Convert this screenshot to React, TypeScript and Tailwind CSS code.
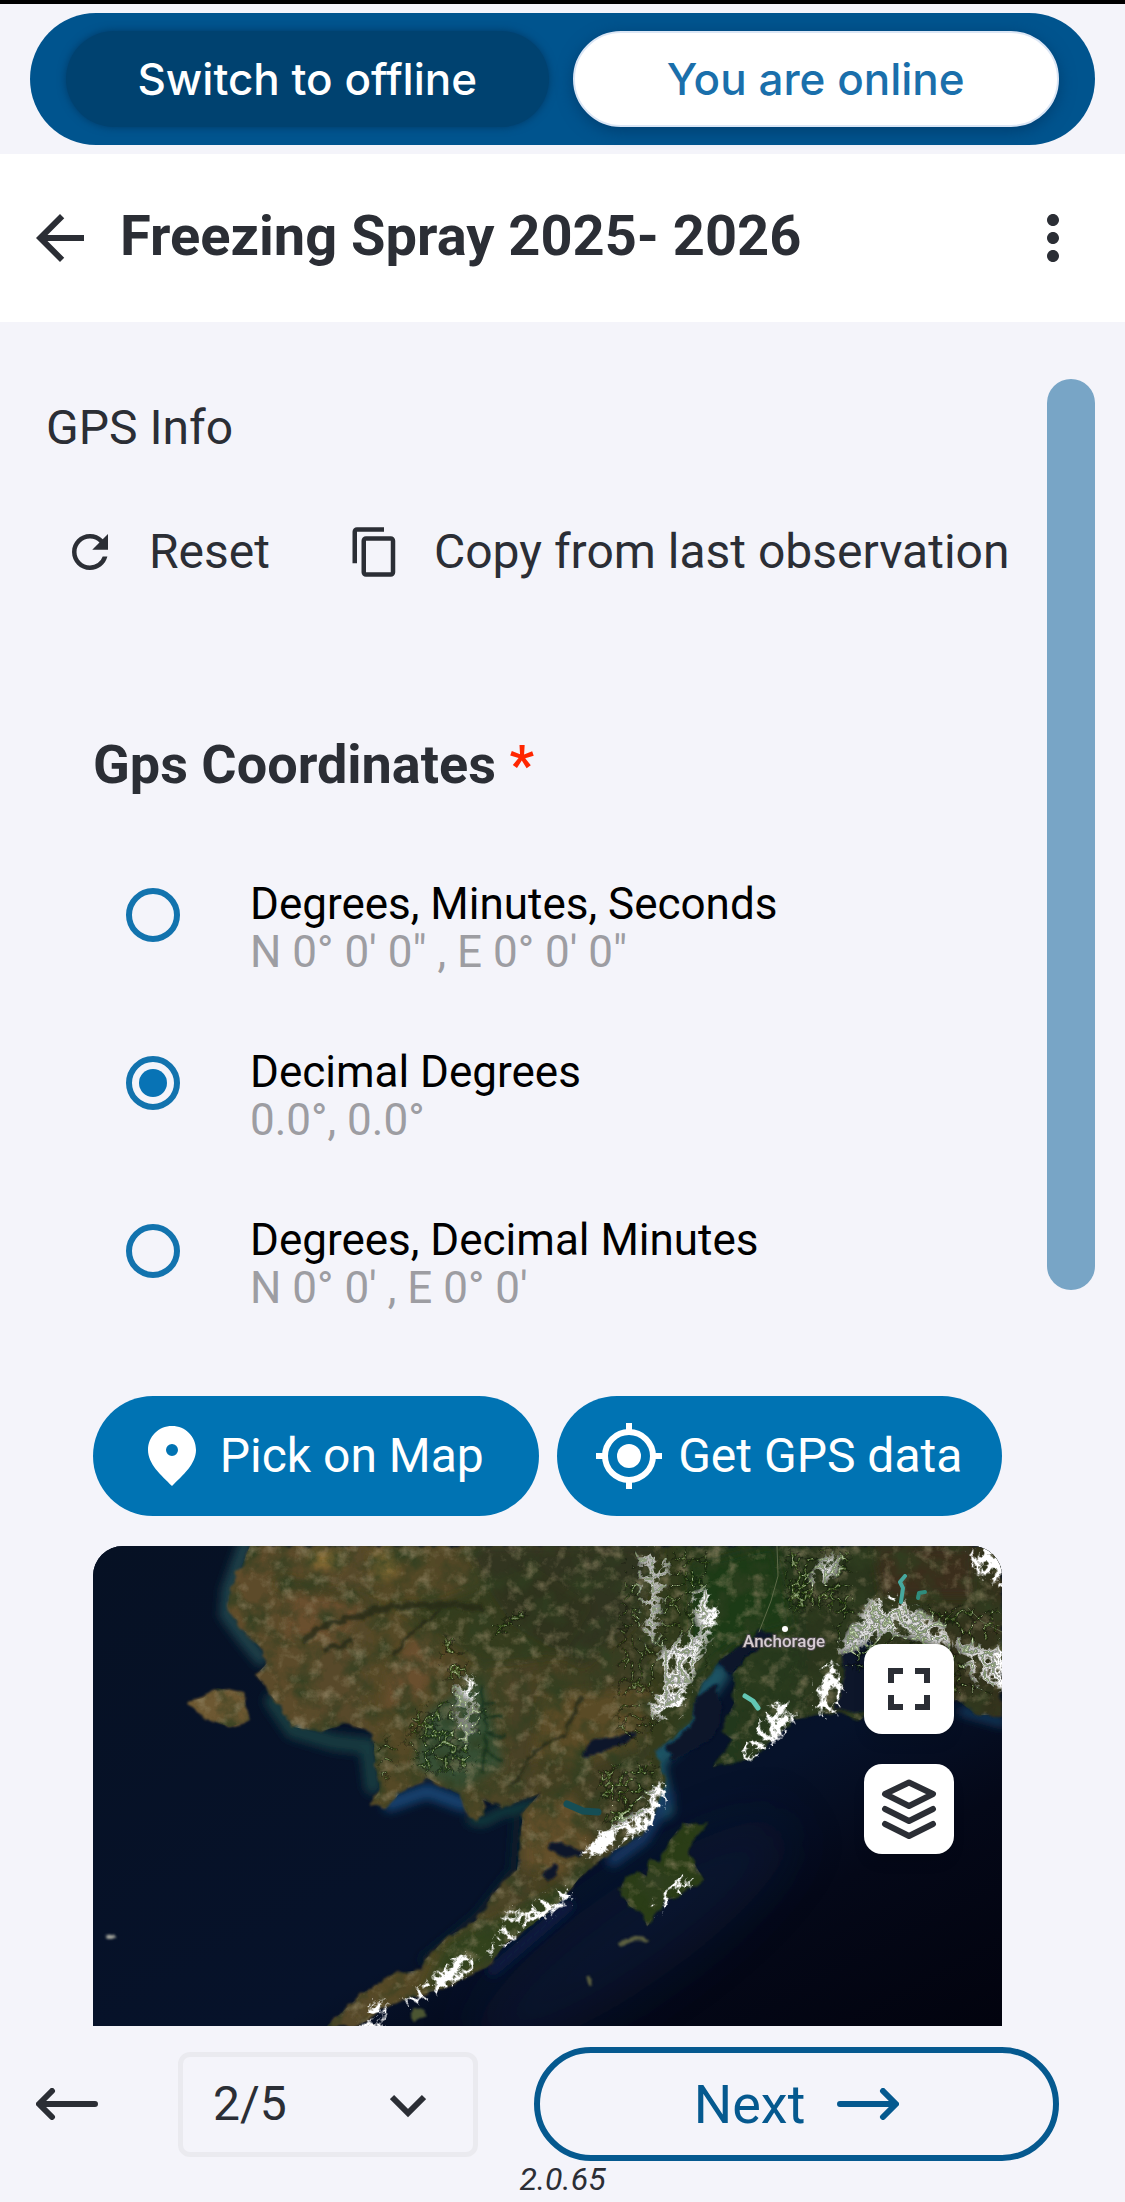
import clsx from "clsx";
import { useState } from "react";
import { MdArrowBack, MdContentCopy, MdFullscreen, MdMoreVert, MdRefresh } from "react-icons/md";

const formats = [
  { id: "dms", label: "Degrees, Minutes, Seconds", value: "N 0° 0' 0\" , E 0° 0' 0\"" },
  { id: "dd", label: "Decimal Degrees", value: "0.0°, 0.0°" },
  { id: "ddm", label: "Degrees, Decimal Minutes", value: "N 0° 0' , E 0° 0'" },
];

const pages = [1, 2, 3, 4, 5];

const MAINLAND =
  "M157 0L150 17L137 44L135 61L147 81L167 101L174 117L163 129L174 144L187 161L200 181L227 186L254 177L280 187L282 217L287 244L277 259L294 261L307 247L334 232L367 249L376 270L384 275L392 270L390 254L410 262L447 247L430 267L427 294L424 324L400 347L384 374L354 391L332 414L329 424L300 427L270 447L234 480L266 480L287 463L320 451L354 441L394 421L412 398L440 378L470 353L487 331L517 307L547 291L563 262L572 237L562 205L597 177L607 141L627 114L647 101L667 87L682 90L654 111L640 127L641 157L627 184L640 194L620 221L654 214L684 191L700 174L744 166L767 174L790 160L864 154L884 169L909 169V0Z";
const KODIAK = "M527 344L532 331L544 324L554 330L557 311L566 318L577 294L590 277L617 279L600 292L596 308L611 334L594 342L584 351L570 356L554 381L550 368L536 360Z";
const NUNIVAK = "M94 156L110 152L124 142L150 147L157 174L137 181L110 172Z";

function SatelliteMap() {
  return (
    <svg viewBox="0 0 909 480" preserveAspectRatio="xMidYMid slice" className="block h-full w-full" role="img" aria-label="Satellite map of southwest Alaska">
      <defs>
        <linearGradient id="sea" x1="0" y1="0" x2="1" y2="1">
          <stop offset="0" stopColor="#061124" />
          <stop offset="0.6" stopColor="#06122a" />
          <stop offset="0.76" stopColor="#040818" />
          <stop offset="1" stopColor="#02030e" />
        </linearGradient>
        <linearGradient id="land" x1="130" y1="0" x2="909" y2="0" gradientUnits="userSpaceOnUse">
          <stop offset="0" stopColor="#5f4d2b" />
          <stop offset="0.3" stopColor="#514727" />
          <stop offset="0.5" stopColor="#3f3d22" />
          <stop offset="0.65" stopColor="#24381a" />
          <stop offset="1" stopColor="#34321f" />
        </linearGradient>
        <filter id="soft5" x="-30%" y="-30%" width="160%" height="160%">
          <feGaussianBlur stdDeviation="5" />
        </filter>
        <filter id="soft24" x="-50%" y="-80%" width="200%" height="260%">
          <feGaussianBlur stdDeviation="24" />
        </filter>
        <filter id="coast" x="-5%" y="-5%" width="110%" height="110%">
          <feTurbulence type="fractalNoise" baseFrequency="0.09" numOctaves="3" seed="4" />
          <feDisplacementMap in="SourceGraphic" scale="9" xChannelSelector="R" yChannelSelector="G" />
          <feGaussianBlur stdDeviation="0.8" />
        </filter>
        {/* blurred shape + noise, thresholded, so that edges break up into ridges */}
        <filter id="snow" x="0" y="0" width="909" height="480" filterUnits="userSpaceOnUse" colorInterpolationFilters="sRGB">
          <feTurbulence type="turbulence" baseFrequency="0.075" numOctaves="4" seed="9" />
          <feColorMatrix values="0 0 0 0 1  0 0 0 0 1  0 0 0 0 1  -1.400 0 0 0 1" result="noise" />
          <feGaussianBlur in="SourceGraphic" stdDeviation="6" result="shape" />
          <feComposite in="shape" in2="noise" operator="arithmetic" k2="3" k3="3.600" k4="-4.100" />
          <feGaussianBlur stdDeviation="0.5" />
        </filter>
        <filter id="grain" x="0" y="0" width="100%" height="100%">
          <feTurbulence type="fractalNoise" baseFrequency="0.04" numOctaves="5" seed="21" />
          <feColorMatrix values="0 0 0 0 0.03  0 0 0 0 0.05  0 0 0 0 0.015  2.4 0 0 0 -1" />
        </filter>
        <filter id="speckle" x="0" y="0" width="100%" height="100%">
          <feTurbulence type="fractalNoise" baseFrequency="0.07" numOctaves="5" seed="3" />
          <feColorMatrix values="0 0 0 0 0.3  0 0 0 0 0.25  0 0 0 0 0.14  0 2.2 0 0 -1.1" />
          <feGaussianBlur stdDeviation="0.6" />
        </filter>
        <clipPath id="landClip">
          <path d={MAINLAND} />
          <path d={KODIAK} />
          <path d={NUNIVAK} />
        </clipPath>
      </defs>

      <rect width="909" height="480" fill="url(#sea)" />
      <ellipse cx="540" cy="390" rx="190" ry="50" transform="rotate(-35 540 390)" fill="#071b3a" opacity="0.5" filter="url(#soft24)" />

      {/* shallow water along the shore */}
      <g fill="none" strokeLinecap="round" filter="url(#soft5)">
        <path d="M152 0L136 44L134 68L150 90L168 112" stroke="#1c4048" strokeWidth="15" />
        <path d="M180 155L200 184L240 196L275 200L280 240" stroke="#173a40" strokeWidth="17" />
        <path d="M297 258L334 245L370 258" stroke="#154370" strokeWidth="15" />
        <path d="M378 274L390 276L410 266L440 258" stroke="#15403f" strokeWidth="9" />
        <path d="M424 270L420 324L384 370L330 414" stroke="#0d2029" strokeWidth="7" />
        <path d="M570 262L560 215L600 180L612 145L625 128" stroke="#1a5263" strokeWidth="22" />
        <path d="M520 314L550 292L575 250" stroke="#123762" strokeWidth="13" />
        <path d="M400 424L440 390L475 360" stroke="#0a1b42" strokeWidth="12" />
        <path d="M870 165L909 176" stroke="#12395a" strokeWidth="10" />
      </g>

      <g filter="url(#coast)">
        <path d={MAINLAND} fill="url(#land)" />
        <path d={KODIAK} fill="#2b3c18" />
        <path d={NUNIVAK} fill="#6d5830" />
      </g>

      <g clipPath="url(#landClip)">
        <g filter="url(#soft5)">
          <path d="M215 5H250V22H218ZM278 6H300L304 30L284 34Z" fill="#8c7034" />
          <path d="M200 45L270 50L250 95L190 90ZM300 115L330 80L345 110L330 150L290 165Z" fill="#6b4f2f" />
          <path d="M180 40L280 60L350 55L440 20L500 60L470 110L390 120L300 60L190 30Z" fill="#2d3a1a" opacity="0.75" />
          <path d="M372 0H570L540 80L490 120L420 80L400 50Z" fill="#30341c" opacity="0.85" />
          <path d="M335 165L390 130L410 220L365 245L320 220Z" fill="#2e5237" opacity="0.8" />
          <path d="M430 260L480 250L500 300L470 330L430 320Z" fill="#645029" />
          <path d="M450 150L560 140L545 200L490 220L440 210Z" fill="#5a4c28" />
          <path d="M596 20L680 0L700 80L640 95L600 130Z" fill="#1d3a17" />
          <path d="M780 0H880V50L790 50Z" fill="#3a2d1d" />
          <path d="M354 395L400 375L470 340L480 355L400 415L330 445Z" fill="#33421c" />
        </g>
        <rect width="909" height="480" filter="url(#grain)" opacity="0.9" />
        <rect width="909" height="480" filter="url(#speckle)" opacity="0.7" />
      </g>

      {/* rivers */}
      <g fill="none" stroke="#252b17" opacity="0.8" filter="url(#coast)">
        <path d="M210 95L230 80L300 60L350 58L390 62" strokeWidth="6" />
        <path d="M300 110L320 85L350 62M230 105L260 95" strokeWidth="4" />
        <path d="M420 240L440 205L470 190L490 150" strokeWidth="3" />
      </g>

      {/* lakes, inlets and the sound */}
      <g fill="#08132c" filter="url(#coast)">
        <path d="M488 207L498 196L530 188L545 186L530 198L505 207L492 212Z" />
        <path d="M455 298L468 296L490 306L486 312L470 310L457 304Z" />
        <path d="M450 330L460 316L466 318L456 336Z" />
        <path d="M750 102L775 92L790 110L800 130L795 172L742 162L752 130Z" />
        <path d="M603 150L622 140L628 165L620 192L580 215L572 200L598 182Z" />
        <path d="M627 114L650 98L668 84L680 88L652 112L636 130Z" />
      </g>
      <g fill="none" strokeLinecap="round">
        <path d="M474 258L490 265L505 266" stroke="#164e55" strokeWidth="7" />
        <path d="M666 86L678 55L685 30L684 0" stroke="#5d6a48" strokeWidth="1" />
        <path d="M875 62L888 75L909 86" stroke="#5d6a48" strokeWidth="1" />
      </g>

      {/* snow cover */}
      <g fill="#ffffff" filter="url(#snow)">
        <path d="M540 0L568 0L584 20L574 50L570 95L546 105L544 60Z" opacity="0.85" />
        <path d="M594 44L618 38L628 66L618 92L600 80Z" />
        <path d="M560 108L592 84L618 90L610 118L598 140L588 172L556 176L550 158L568 136Z" />
        <path d="M710 35L728 6L752 4L748 32L722 46Z" />
        <path d="M752 82L772 54L800 48L830 62L850 74L870 90L850 108L820 96L795 92L760 110L736 112Z" />
        <path d="M722 130L740 108L752 140L744 174L722 170Z" />
        <path d="M682 152L704 156L702 182L678 200L652 220L644 210L664 178Z" />
        <path d="M870 10L900 -10L920 -10V48L892 36Z" />
        <path d="M856 90L920 100V144L880 144Z" />
        <path d="M358 130L380 124L392 160L386 196L370 210L354 176Z" opacity="0.78" />
        <path d="M480 306L506 284L540 264L548 244L574 232L576 252L560 282L530 298L500 314Z" />
        <path d="M420 380L446 352L476 338L482 354L456 372L430 384Z" />
        <path d="M400 382L416 358L430 366L414 390Z" opacity="0.8" />
        <path d="M386 404L420 382L430 392L398 412Z" opacity="0.9" />
        <path d="M300 460L340 430L364 406L386 408L380 428L352 444L318 462Z" />
        <path d="M262 486L278 454L298 452L290 484Z" />
        <path d="M552 364L574 338L596 318L604 332L586 354L562 372Z" opacity="0.88" />
      </g>
      <g fill="#aab69e" opacity="0.7" filter="url(#snow)">
        <path d="M310 170L360 140L400 160L380 230L320 230Z" opacity="0.72" />
        <path d="M345 90L365 85L380 120L370 145L345 130ZM390 80L440 55L436 75L400 100Z" opacity="0.75" />
        <path d="M530 0H620V120L560 190L520 210V100Z" opacity="0.65" />
        <path d="M690 0H760V60L690 70ZM740 50L909 60V150L860 150L740 120Z" opacity="0.72" />
        <path d="M500 220L570 210L560 270L510 290Z" opacity="0.75" />
        <path d="M280 190L310 190L300 240L284 240Z" opacity="0.7" />
      </g>
      <g fill="none" stroke="#18301b" strokeWidth="3" opacity="0.85" filter="url(#coast)">
        <path d="M388 140L394 180L390 228M390 155L402 158M392 170L410 170M392 188L412 190M390 205L408 214" />
      </g>
      <g fill="none" strokeLinecap="round" strokeLinejoin="round">
        <path d="M808 56L810 42L807 36L812 30" stroke="#46a89e" strokeWidth="4" />
        <path d="M825 52L826 47L832 46" stroke="#2f8c7d" strokeWidth="4" />
        <path d="M652 150L660 155L665 162" stroke="#63c7b5" strokeWidth="5" />
      </g>

      <g fill="#5b5f3f" filter="url(#coast)">
        <path d="M525 398L534 390L556 392L554 396L538 395L528 401Z" />
        <path d="M493 437L498 430L497 440Z" />
        <path d="M12 389L20 388L24 391L18 394Z" fill="#a0a29a" />
        <path d="M318 464L328 462L334 470L322 476Z" fill="#4b5530" />
      </g>

      <circle cx="692" cy="83" r="3" fill="#ffffff" />
      <text x="650" y="101" fontFamily="Roboto, sans-serif" fontSize="17" fontWeight="500" fill="#d6cdd2" stroke="#4a4648" strokeWidth="2" paintOrder="stroke">
        Anchorage
      </text>
    </svg>
  );
}

function PinIcon() {
  return (
    <svg viewBox="0 0 48 60" className="h-15 w-12 shrink-0" fill="currentColor" aria-hidden="true">
      <path fillRule="evenodd" d="M24 0C10.500 0 0 10.500 0 24C0 38 13 49 24 60C35 49 48 38 48 24C48 10.500 37.500 0 24 0ZM24 18A6 6 0 1 1 24 30A6 6 0 1 1 24 18Z" />
    </svg>
  );
}

function CrosshairIcon() {
  return (
    <svg viewBox="0 0 66 66" className="size-[66px] shrink-0" fill="none" stroke="currentColor" strokeWidth="6" aria-hidden="true">
      <circle cx="33" cy="33" r="24" />
      <circle cx="33" cy="33" r="12" fill="currentColor" stroke="none" />
      <path d="M33 0V8M33 58V66M0 33H8M58 33H66" />
    </svg>
  );
}

function LayersIcon() {
  return (
    <svg viewBox="0 0 54 60" className="h-15 w-14" fill="none" stroke="currentColor" strokeWidth="6" strokeLinejoin="round" strokeLinecap="round" aria-hidden="true">
      <path d="M27 3.500L51 15L27 27L3 15Z" />
      <path d="M3 30L27 42L51 30" />
      <path d="M3 45L27 57L51 45" />
    </svg>
  );
}

function LongArrow({ flip }: { flip?: boolean }) {
  return (
    <svg viewBox="0 0 62 32" className={clsx("h-8 w-[62px]", flip && "rotate-180")} fill="none" stroke="currentColor" strokeWidth="6" strokeLinecap="round" strokeLinejoin="round" aria-hidden="true">
      <path d="M3 16H58M46 3L59 16L46 29" />
    </svg>
  );
}

export default function App() {
  const [format, setFormat] = useState("dd");
  const [page, setPage] = useState(2);

  return (
    <div className="flex min-h-screen flex-col bg-[#f4f4fa] font-['Roboto',sans-serif] text-[#2b2e35]">
      <div className="h-1 bg-black" />

      <div className="px-[30px] pt-[9px] pb-[9px]">
        <div className="flex gap-6 rounded-full bg-[#00548e] px-9 py-[18px] font-['Inter',sans-serif] text-[44px] font-medium">
          <button className="h-24 flex-1 rounded-full bg-[#004270] text-white shadow-[0_0_8px_#003a66]">Switch to offline</button>
          <button className="h-24 flex-1 rounded-full border-2 border-[#dbe6f5] bg-white text-[#1a6fab] shadow-[0_4px_16px_#003f70]">You are online</button>
        </div>
      </div>

      <header className="flex h-[168px] items-center bg-white pr-9 pl-6">
        <button aria-label="Back">
          <MdArrowBack className="size-[72px]" />
        </button>
        <h1 className="ml-6 flex-1 pb-1 text-[56px] font-bold">Freezing Spray 2025- 2026</h1>
        <button aria-label="More options">
          <MdMoreVert className="size-[72px]" />
        </button>
      </header>

      <main className="flex flex-1 pr-[30px]">
        <div className="min-w-0 flex-1">
          <h2 className="mt-[74px] ml-[46px] text-5xl leading-[64px]">GPS Info</h2>

          <div className="mt-[60px] ml-[63px] flex h-16 items-center text-5xl whitespace-nowrap">
            <button className="flex items-center gap-8">
              <MdRefresh className="size-[54px]" />
              Reset
            </button>
            <button className="ml-[78px] flex items-center gap-8">
              <MdContentCopy className="size-[54px]" />
              Copy from last observation
            </button>
          </div>

          <div className="mt-[148px] ml-[93px] mr-[45px]">
            <fieldset>
              <legend className="text-[54px] leading-[66px] font-bold">
                Gps Coordinates <span className="text-[#ff2600]">*</span>
              </legend>
              <div className="mt-[82px] flex flex-col gap-[72px]">
                {formats.map((item) => (
                  <label key={item.id} className="flex items-start pl-[33px] text-[44px] leading-[48px]">
                    <input
                      type="radio"
                      name="format"
                      checked={format === item.id}
                      onChange={() => setFormat(item.id)}
                      className="mt-2 mr-[70px] flex size-[54px] shrink-0 appearance-none items-center justify-center rounded-full border-[6px] border-[#1273ae] before:size-7 before:rounded-full checked:before:bg-[#0873b5]"
                    />
                    <span className="flex flex-col">
                      <span className="text-black">{item.label}</span>
                      <span className="text-[#9d9da2]">{item.value}</span>
                    </span>
                  </label>
                ))}
              </div>
            </fieldset>

            <div className="mt-[84px] flex gap-[18px] text-5xl text-white">
              <button className="flex h-30 flex-1 items-center justify-center gap-6 rounded-full bg-[#0073b3]">
                <PinIcon />
                Pick on Map
              </button>
              <button className="flex h-30 flex-1 items-center justify-center gap-4 rounded-full bg-[#0073b3]">
                <CrosshairIcon />
                Get GPS data
              </button>
            </div>

            <div className="relative mt-[30px] h-[480px] overflow-hidden rounded-t-[30px] bg-[#061124]">
              <SatelliteMap />
              <div className="absolute top-[98px] right-12 flex flex-col gap-[30px]">
                <button aria-label="Full screen" className="flex size-[90px] items-center justify-center rounded-[18px] bg-white shadow-lg">
                  <MdFullscreen className="size-[72px]" />
                </button>
                <button aria-label="Layers" className="flex size-[90px] items-center justify-center rounded-[18px] bg-white shadow-lg">
                  <LayersIcon />
                </button>
              </div>
            </div>
          </div>
        </div>

        <div className="mt-[57px] h-[911px] w-12 rounded-full bg-[#78a5c6]" />
      </main>

      <footer className="px-9 pt-[21px]">
        <div className="flex items-center">
          <button aria-label="Previous page">
            <LongArrow flip />
          </button>
          <div className="relative ml-20 w-[300px]">
            <select
              aria-label="Page"
              value={page}
              onChange={(e) => setPage(Number(e.target.value))}
              className="h-[105px] w-full appearance-none rounded-[12px] border-[5px] border-[#eaeaef] bg-transparent pl-[30px] text-5xl"
            >
              {pages.map((n) => (
                <option key={n} value={n}>
                  {n}/5
                </option>
              ))}
            </select>
            <svg viewBox="0 0 36 24" className="pointer-events-none absolute top-[42px] right-[52px] h-6 w-9" fill="none" stroke="currentColor" strokeWidth="6" aria-hidden="true">
              <path d="M2 3L18 19L34 3" />
            </svg>
          </div>
          <button className="mr-[30px] ml-14 flex h-[114px] flex-1 items-center justify-center gap-8 rounded-full border-[6px] border-[#05598f] text-[54px] text-[#05598f]">
            Next
            <LongArrow />
          </button>
        </div>
        <p className="text-center text-[32px] leading-[36px] pb-[5px] italic">2.0.65</p>
      </footer>
    </div>
  );
}
